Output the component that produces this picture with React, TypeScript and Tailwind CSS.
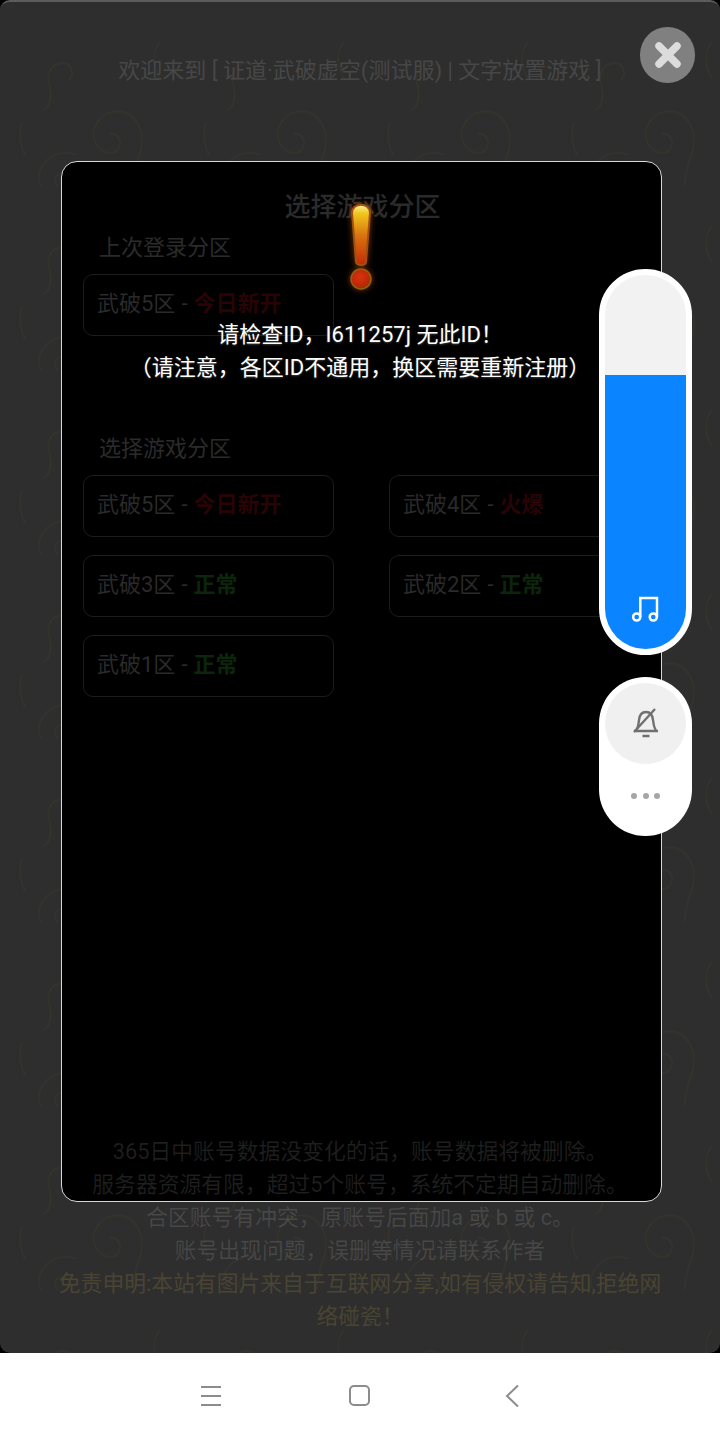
const ZONES = [
  { name: '武破5区', status: '今日新开', tone: 'text-[#2a0305]' },
  { name: '武破4区', status: '火爆', tone: 'text-[#2a0305]' },
  { name: '武破3区', status: '正常', tone: 'text-[#0b260b]' },
  { name: '武破2区', status: '正常', tone: 'text-[#0b260b]' },
  { name: '武破1区', status: '正常', tone: 'text-[#0b260b]' },
];

function ZoneButton({ name, status, tone }: { name: string; status: string; tone: string }) {
  return (
    <div className="flex h-[62px] w-[251px] items-center rounded-[10px] border border-[#1c1c1c] pb-[4px] pl-[13px] text-[22px] text-[#2a2a2a]">
      <span>{name}</span>
      <span className="mx-[6px]">-</span>
      <span className={`font-bold ${tone}`}>{status}</span>
    </div>
  );
}

function Swirls() {
  return (
    <svg className="absolute inset-0 h-full w-full" aria-hidden="true">
      <defs>
        <pattern id="swirl" width="184" height="184" patternUnits="userSpaceOnUse" x="0" y="0">
          <g fill="none" stroke="#34332c" strokeWidth="1.5">
            <path d="M57 184c-6-8 2-16 9-12 9 5 6 20-6 22-15 2-24-12-20-25 5-15 22-22 36-16" />
            <path d="M69 78c6-6 3-16-6-17-11 0-17 11-14 21 3 12 3 20-6 27" />
            <path d="M105 150c-10-4-14-17-9-27 5-11 18-17 30-12 13 6 19 21 15 36-2 9-8 20-8 37" />
            <path d="M105 150c7 3 14-1 15-8 1-6-4-11-10-10" />
            <path d="M22 120c-3 10-2 22 3 34" />
            <path d="M160 40c-8 8-8 24 0 36" />
          </g>
        </pattern>
      </defs>
      <rect width="100%" height="100%" fill="url(#swirl)" />
    </svg>
  );
}

function AlertMark() {
  return (
    <svg width="40" height="96" viewBox="0 0 40 96" className="ml-[2px] drop-shadow-[0_0_3px_rgba(200,90,20,0.6)]" aria-hidden="true">
      <defs>
        <linearGradient id="markBody" x1="0" y1="0" x2="0" y2="1">
          <stop offset="0" stopColor="#fff3a0" />
          <stop offset="0.14" stopColor="#efc81c" />
          <stop offset="0.5" stopColor="#d9760f" />
          <stop offset="1" stopColor="#c42a08" />
        </linearGradient>
        <radialGradient id="markDot" cx="0.45" cy="0.4" r="0.6">
          <stop offset="0" stopColor="#d8330e" />
          <stop offset="0.7" stopColor="#bf2807" />
          <stop offset="1" stopColor="#8a3a0a" />
        </radialGradient>
      </defs>
      <path d="M11 14c0-11 18-11 18 0L25 63c-.3 4-9 4-10 0Z" fill="url(#markBody)" stroke="#a3500c" strokeWidth="2" />
      <circle cx="20" cy="80" r="10" fill="url(#markDot)" stroke="#96600e" strokeWidth="1.5" />
    </svg>
  );
}

function NavBar() {
  return (
    <div className="flex h-[87px] shrink-0 items-center bg-white pb-[2px] pl-[200px]">
      <svg width="22" height="22" viewBox="0 0 22 22" fill="none" stroke="#8c8c8c" strokeWidth="2" aria-hidden="true">
        <path d="M1 2h20M1 11h20M1 20h20" />
      </svg>
      <div className="ml-[127px] h-[21px] w-[21px] rounded-[5px] border-2 border-[#8c8c8c]" />
      <svg className="ml-[134px]" width="16" height="24" viewBox="0 0 16 24" fill="none" stroke="#8c8c8c" strokeWidth="2" aria-hidden="true">
        <path d="M14 1.500 3 12l11 10.500" />
      </svg>
    </div>
  );
}

export default function App() {
  return (
    <div className="flex h-[1440px] w-[720px] flex-col overflow-hidden bg-black font-['Roboto','Noto_Sans_CJK_SC',sans-serif]">
      <div className="relative flex h-[1353px] flex-col overflow-hidden rounded-[10px] border-t-2 border-[#5c5c5c] bg-[#2e2e2e]">
        <Swirls />

        <h1 className="relative pt-[52px] text-center text-[22px] leading-[33px] font-normal text-[#474747]">
          欢迎来到 [ 证道·武破虚空(测试服) | 文字放置游戏 ]
        </h1>

        {/* close */}
        <div className="absolute top-[25px] left-[640px] flex h-[56px] w-[55px] items-center justify-center rounded-full bg-[#808080]">
          <svg width="30" height="30" viewBox="0 0 30 30" stroke="#dcdcdc" strokeWidth="7.5" strokeLinecap="round" aria-hidden="true">
            <path d="M6 6l18 18M24 6 6 24" />
          </svg>
        </div>

        {/* zone picker */}
        <div className="absolute top-[159px] left-[61px] flex h-[1041px] w-[601px] flex-col rounded-[16px] border border-[#d8d8d8] bg-black">
          <h2 className="pt-[27px] pl-[2px] text-center text-[26px] leading-[36px] font-medium text-[#2b2b2b]">选择游戏分区</h2>
          <div className="mt-[6px] pl-[37px] text-[22px] leading-[33px] text-[#2b2b2b]">上次登录分区</div>
          <div className="mt-[10px] pl-[21px]">
            <ZoneButton {...ZONES[0]} />
          </div>
          <div className="mt-[96px] pl-[37px] text-[22px] leading-[33px] text-[#2b2b2b]">选择游戏分区</div>
          <div className="mt-[10px] grid grid-cols-[251px_251px] gap-x-[55px] gap-y-[18px] pl-[21px]">
            {ZONES.map((z) => (
              <ZoneButton key={z.name} {...z} />
            ))}
          </div>
        </div>

        {/* notes sit above the panel edge */}
        <div className="relative mt-auto pb-[20px] text-center text-[21.8px] leading-[33px] text-white/[0.12]">
          <p>365日中账号数据没变化的话，账号数据将被删除。</p>
          <p>服务器资源有限，超过5个账号，系统不定期自动删除。</p>
          <p>合区账号有冲突，原账号后面加a 或 b 或 c。</p>
          <p>账号出现问题，误删等情况请联系作者</p>
          <p className="text-[#4a4433]">
            免责申明:本站有图片来自于互联网分享,如有侵权请告知,拒绝网
            <br />
            络碰瓷！
          </p>
        </div>

        {/* alert toast */}
        <div className="absolute top-[197px] left-0 flex w-[720px] flex-col items-center text-center text-[22px] leading-[33px] text-white [text-shadow:0_1px_2px_rgba(255,255,255,0.25)]">
          <AlertMark />
          <p className="mt-[23px]">请检查ID，I611257j 无此ID！</p>
          <p>（请注意，各区ID不通用，换区需要重新注册）</p>
        </div>
      </div>

      <NavBar />

      {/* floating volume panel */}
      <div className="absolute top-[269px] left-[599px] flex w-[93px] flex-col gap-[22px]">
        <div className="flex h-[386px] flex-col overflow-hidden rounded-full border-[6px] border-white bg-[#f2f2f2]">
          <div className="mt-auto flex h-[274px] items-end justify-center bg-[#0a84ff] pb-[24px]">
            <svg width="30" height="30" viewBox="0 0 30 30" fill="none" stroke="#fff" strokeWidth="2.5" aria-hidden="true">
              <path d="M9.3 21.700V3H26v18.700" />
              <circle cx="5.700" cy="22" r="3.600" />
              <circle cx="22.300" cy="22" r="3.600" />
            </svg>
          </div>
        </div>
        <div className="flex h-[159px] flex-col items-center rounded-full bg-white pt-[6px]">
          <div className="flex h-[81px] w-[81px] items-center justify-center rounded-full bg-[#f0f0f0] pb-[3px]">
            <svg width="30" height="32" viewBox="0 0 30 32" fill="none" stroke="#707070" strokeWidth="2.4" aria-hidden="true">
              <path d="M3 25h24M11.500 30h7M5 25c2-3 2.500-6 3-11 .5-5 3-8 7-8s6.500 3 7 8c.4 5 1.500 8 3 11" />
              <path d="M3 26 24 3" />
            </svg>
          </div>
          <div className="mt-[29px] flex gap-[5.5px]">
            <span className="h-[6px] w-[6px] rounded-full bg-[#a6a6a6]" />
            <span className="h-[6px] w-[6px] rounded-full bg-[#a6a6a6]" />
            <span className="h-[6px] w-[6px] rounded-full bg-[#a6a6a6]" />
          </div>
        </div>
      </div>
    </div>
  );
}
